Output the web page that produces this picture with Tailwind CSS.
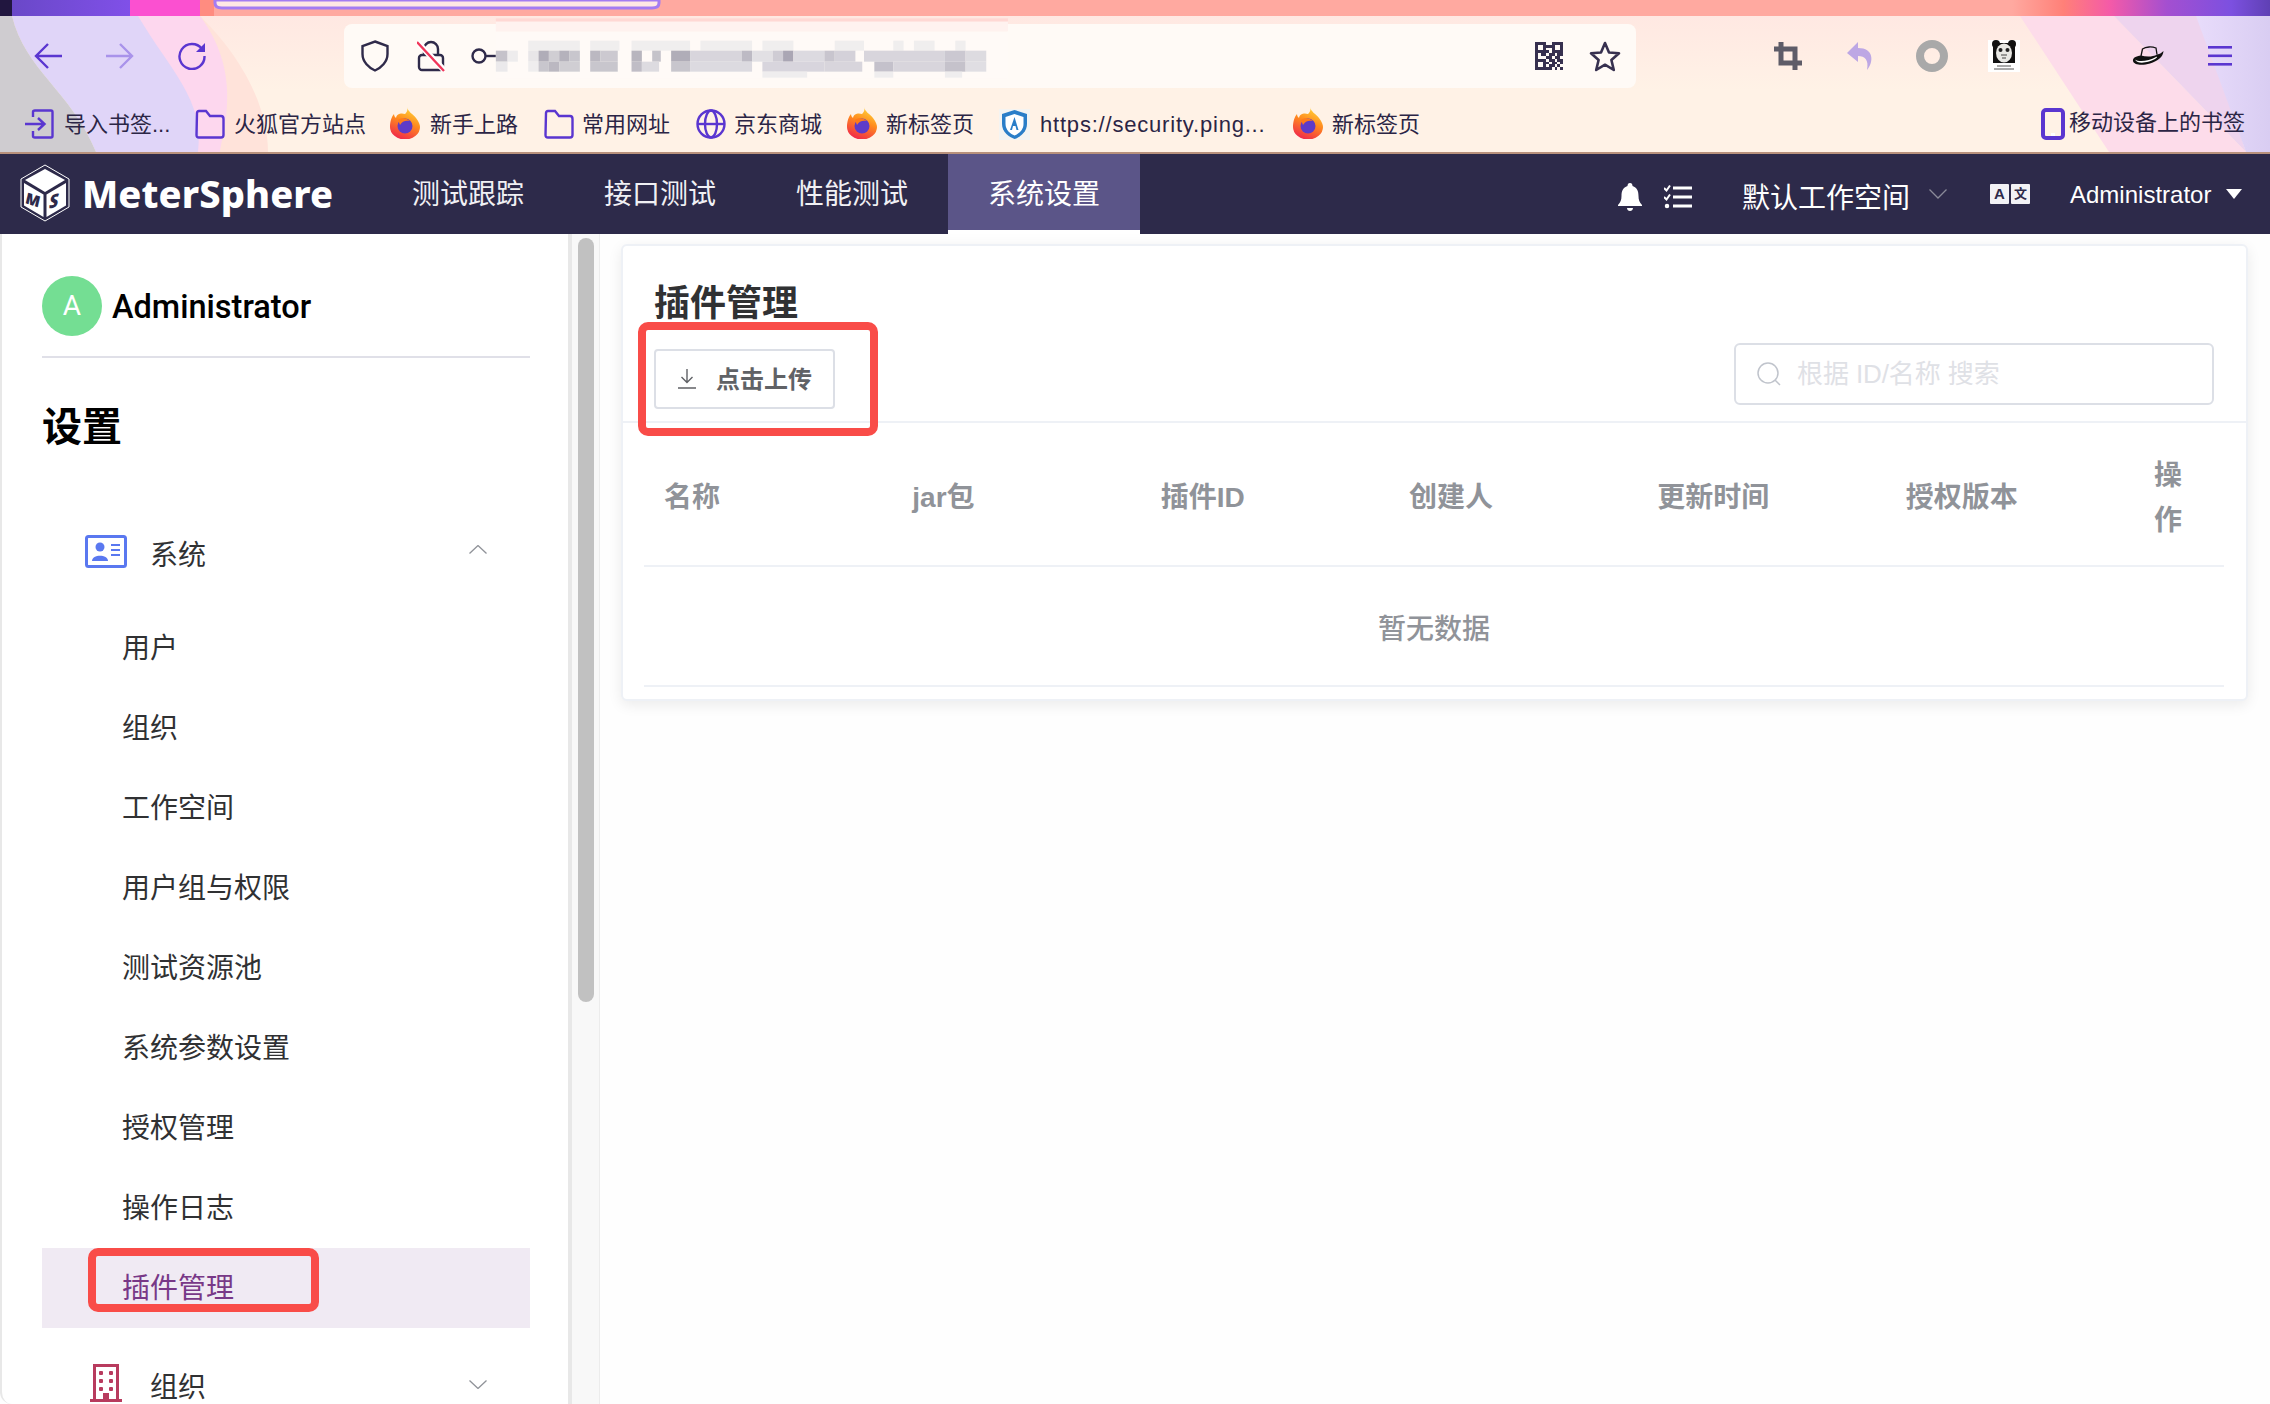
<!DOCTYPE html>
<html lang="zh-CN">
<head>
<meta charset="utf-8">
<title>插件管理</title>
<script src="https://cdn.jsdelivr.net/npm/@tailwindcss/browser@4"></script>
</head>
<body class="m-0 bg-[#fefefe]">
<div class="w-[2270px] h-[1404px] overflow-hidden flex flex-col font-['Liberation_Sans','Noto_Sans_CJK_SC',sans-serif] relative">

  <!-- browser chrome -->
  <header class="relative h-[154px] shrink-0 flex flex-col text-[#2b2545]">
    <svg class="absolute inset-0" width="2270" height="154" viewBox="0 0 2270 154" aria-hidden="true">
      <defs>
        <linearGradient id="tb" x1="0" y1="0" x2="0" y2="1"><stop offset="0" stop-color="#ffe8e2"/><stop offset="0.55" stop-color="#fff2e6"/><stop offset="1" stop-color="#fff2e6"/></linearGradient>
        <linearGradient id="rl" x1="0" y1="0" x2="1" y2="0"><stop offset="0" stop-color="#e8dcfb"/><stop offset="1" stop-color="#d9cdf2"/></linearGradient>
        <linearGradient id="sp" x1="0" y1="0" x2="1" y2="0"><stop offset="0" stop-color="#6a48c8"/><stop offset="1" stop-color="#8050e8"/></linearGradient>
        <linearGradient id="sr" x1="0" y1="0" x2="1" y2="0"><stop offset="0" stop-color="#ffa9a0"/><stop offset="0.2" stop-color="#ff8078"/><stop offset="0.38" stop-color="#f45aa8"/><stop offset="0.6" stop-color="#a44fd0"/><stop offset="0.85" stop-color="#7c50e0"/><stop offset="1" stop-color="#5f40b4"/></linearGradient>
      </defs>
      <rect x="0" y="16" width="2270" height="136" fill="url(#tb)"/>
      <rect x="0" y="0" width="2270" height="16" fill="#ffa9a0"/>
      <rect x="0" y="0" width="12" height="16" fill="#21163f"/>
      <rect x="12" y="0" width="118" height="16" fill="url(#sp)"/>
      <rect x="130" y="0" width="70" height="16" fill="#fb50d0"/>
      <rect x="200" y="0" width="14" height="16" fill="#ff8c80"/>
      <rect x="2012" y="0" width="258" height="16" fill="url(#sr)"/>
      <path d="M200 16 C245 60 268 110 268 152 L220 152 C222 90 205 50 138 16 Z" fill="#ffe3da"/>
      <path d="M138 16 H200 C240 70 226 120 220 152 H96 Z" fill="#fdd7ee"/>
      <path d="M12 16 H138 C170 70 205 100 198 152 H96 C70 90 25 70 12 16 Z" fill="#e0d5f8"/>
      <path d="M0 16 H12 C25 70 70 90 96 152 H0 Z" fill="#cfccd0"/>
      <path d="M2020 16 H2114 L2246 152 H2109 Z" fill="#fddcea"/>
      <path d="M2114 16 H2200 L2246 152 Z" fill="#eed4ee"/>
      <path d="M2196 16 H2270 V152 H2246 Z" fill="url(#rl)"/>
      <rect x="0" y="152" width="2270" height="2" fill="#b8917c"/>
      <path d="M215 0 V3 Q215 8 222 8 H652 Q659 8 659 3 V0 Z" fill="#ffe8e4" stroke="#a47cf2" stroke-width="3"/>
    </svg>

    <div class="relative h-[16px]"></div>

    <!-- toolbar -->
    <div class="relative h-[80px] flex items-center">
      <button class="ml-[34px] w-[28px] h-[28px] flex" aria-label="后退"><svg width="28" height="28" viewBox="0 0 28 28" fill="none" stroke="#5a36d0" stroke-width="2.4"><path d="M14 2 L2 14 L14 26 M2 14 H28"/></svg></button>
      <button class="ml-[44px] w-[28px] h-[28px] flex" aria-label="前进"><svg width="28" height="28" viewBox="0 0 28 28" fill="none" stroke="#a993ea" stroke-width="2.4"><path d="M14 2 L26 14 L14 26 M26 14 H0"/></svg></button>
      <button class="ml-[44px] w-[28px] h-[28px] flex" aria-label="刷新"><svg width="28" height="28" viewBox="0 0 28 28" fill="none"><path d="M24 7 A12.5 12.5 0 1 0 26.5 14" stroke="#5a36d0" stroke-width="2.4"/><path d="M27 1 V10 H18 Z" fill="#5a36d0"/></svg></button>

      <div class="ml-[138px] w-[1292px] h-[64px] rounded-[8px] bg-[#fffaf6] flex items-center pl-[17px] pr-[15px]">
        <svg width="28" height="32" viewBox="0 0 28 32" fill="none" stroke="#2f2a4a" stroke-width="2.4"><path d="M14 1.5 L26.5 6 V14 C26.5 22 20 28 14 30.5 C8 28 1.5 22 1.5 14 V6 Z"/></svg>
        <svg class="ml-[28px]" width="28" height="32" viewBox="0 0 28 32" fill="none"><path d="M7 14 V9 A7 7 0 0 1 21 9 V14" stroke="#2f2a4a" stroke-width="2.4"/><rect x="2" y="15" width="24" height="15" rx="3" stroke="#2f2a4a" stroke-width="2.4"/><path d="M0 2 L28 31" stroke="#fff" stroke-width="6"/><path d="M0 2 L27 31" stroke="#f0365a" stroke-width="2.4"/></svg>
        <svg class="ml-[26px]" width="26" height="20" viewBox="0 0 26 20" fill="none" stroke="#2f2a4a" stroke-width="2.4"><circle cx="8" cy="10" r="6.5"/><path d="M14.5 10 H26"/></svg>
        <div class="flex-1"></div>
        <svg width="28" height="28" viewBox="0 0 10 10" fill="#37304f" fill-rule="evenodd" shape-rendering="crispEdges"><path d="M0 0h4v4h-4z M1 1v2h2v-2z M6 0h4v4h-4z M7 1v2h2v-2z M0 6h4v4h-4z M1 7v2h2v-2z"/><path d="M4 1h2v1h-2z M4 3h1v1h-1z M0 4h1v2h-1z M2 4h2v1h-2z M5 4h2v1h-2z M8 4h2v1h-2z M4 5h2v1h-2z M7 5h2v1h-2z M5 6h2v1h-2z M8 6h2v1h-2z M4 7h1v1h-1z M6 7h2v1h-2z M9 7h1v1h-1z M5 8h2v1h-2z M8 8h1v1h-1z M4 9h2v1h-2z M7 9h1v1h-1z M9 9h1v1h-1z"/></svg>
        <svg class="ml-[26px]" width="32" height="31" viewBox="0 0 32 31" fill="none" stroke="#37304f" stroke-width="2.6" stroke-linejoin="round"><path d="M16 2 L20 11.5 L30 12.3 L22.4 19 L24.8 29 L16 23.7 L7.2 29 L9.6 19 L2 12.3 L12 11.5 Z"/></svg>
      </div>

      <svg class="ml-[138px]" width="28" height="28" viewBox="0 0 28 28" fill="none" stroke="#5e5c68" stroke-width="5"><path d="M7 0 V21 H28 M0 7 H21 V28"/></svg>
      <svg class="ml-[44px]" width="28" height="28" viewBox="0 0 28 28" fill="#bda7e4"><path d="M12 0 L1 11 L12 20 V14 C19 14 23 18 21 28 C28 20 28 6 12 6 Z"/></svg>
      <svg class="ml-[42px]" width="32" height="32" viewBox="0 0 32 32" fill="none" stroke="#a9a9a9" stroke-width="8"><circle cx="16" cy="16" r="12"/></svg>
      <svg class="ml-[40px]" width="32" height="32" viewBox="0 0 32 32"><rect width="32" height="32" fill="#fff"/><circle cx="8" cy="4" r="4" fill="#111"/><circle cx="24" cy="4" r="4" fill="#111"/><path d="M5 3 H27 V23 H5 Z" fill="#111"/><ellipse cx="16" cy="13" rx="8" ry="9.500" fill="#e8e8e4"/><circle cx="12.500" cy="10" r="2" fill="#222"/><circle cx="19.500" cy="10" r="2" fill="#222"/><path d="M13 15 H19 M14 18 H18" stroke="#444"/><path d="M9 26 H23 M6 29 H26" stroke="#555" stroke-width="1"/></svg>
      <svg class="ml-[112px]" width="32" height="20" viewBox="0 0 32 20" fill="none"><path d="M9 10 L10.500 3 C14 0.500 20 0.500 24 2 L25 8.500" stroke="#111" stroke-width="1.300"/><path d="M9 9.500 C14 11 21 11 25 8.500 C28 8 30 6.500 31.500 5 C31 11 26 15 18 17.500 C10 20 2 19 1 15 C0.500 12 4 10 9 9.500 Z" fill="#111"/><path d="M3 13.500 C7 16.500 17 15 24 11 C27 10 24 13.500 17 15.500 C10 17.500 5 17 3 13.500 Z" fill="#fff"/></svg>
      <svg class="ml-[44px]" width="24" height="20" viewBox="0 0 24 20" fill="#5a36d0"><rect y="0" width="24" height="2.600"/><rect y="8.500" width="24" height="2.600"/><rect y="17" width="24" height="2.600"/></svg>
    </div>

    <!-- pixelated address -->
    <svg class="absolute left-[480px] top-[10px] blur-[0.7px]" width="540" height="90" viewBox="0 0 1568 270" preserveAspectRatio="none" aria-hidden="true">
      <rect x="46" y="25" width="1487" height="10" fill="#ffd8d4"/>
      <rect x="46" y="35" width="1487" height="30" fill="#fff2ef"/>
      <rect x="46" y="65" width="1487" height="140" fill="#fffaf7"/>
      <g fill="#f0eeee"><rect x="140" y="92" width="150" height="30"/><rect x="320" y="92" width="85" height="30"/><rect x="440" y="92" width="170" height="30"/><rect x="640" y="92" width="150" height="30"/><rect x="820" y="92" width="90" height="30"/><rect x="1030" y="92" width="85" height="30"/><rect x="1200" y="92" width="30" height="30"/><rect x="1260" y="92" width="60" height="30"/><rect x="1380" y="92" width="30" height="30"/></g>
      <rect x="46" y="122" width="34" height="33" fill="#c5c2ca"/><rect x="80" y="122" width="30" height="33" fill="#eeeced"/><rect x="140" y="122" width="30" height="33" fill="#e8e6e8"/><rect x="170" y="122" width="30" height="33" fill="#b0adb8"/><rect x="200" y="122" width="30" height="33" fill="#d0ced3"/><rect x="230" y="122" width="30" height="33" fill="#b5b2bc"/><rect x="260" y="122" width="30" height="33" fill="#c8c6cd"/><rect x="320" y="122" width="30" height="33" fill="#bbb8c1"/><rect x="350" y="122" width="50" height="33" fill="#ccc9d0"/><rect x="440" y="122" width="30" height="33" fill="#b8b5be"/><rect x="500" y="122" width="25" height="33" fill="#c5c3ca"/><rect x="555" y="122" width="55" height="33" fill="#b0adb8"/><rect x="610" y="122" width="150" height="33" fill="#d8d5dc"/><rect x="760" y="122" width="30" height="33" fill="#bdbac4"/><rect x="790" y="122" width="60" height="33" fill="#e2e0e4"/><rect x="850" y="122" width="30" height="33" fill="#cfccd4"/><rect x="880" y="122" width="30" height="33" fill="#aaa6b4"/><rect x="910" y="122" width="90" height="33" fill="#dcdae0"/><rect x="1000" y="122" width="30" height="33" fill="#c8c5ce"/><rect x="1030" y="122" width="60" height="33" fill="#d4d1d9"/><rect x="1115" y="122" width="235" height="33" fill="#d8d5dc"/><rect x="1350" y="122" width="60" height="33" fill="#cbc8d1"/><rect x="1410" y="122" width="60" height="33" fill="#dddbe0"/>
      <rect x="46" y="155" width="34" height="30" fill="#ebe9eb"/><rect x="140" y="155" width="30" height="30" fill="#efedee"/><rect x="170" y="155" width="30" height="30" fill="#c8c6cd"/><rect x="200" y="155" width="30" height="30" fill="#bbb8c1"/><rect x="230" y="155" width="60" height="30" fill="#d0ced3"/><rect x="320" y="155" width="80" height="30" fill="#c8c6cd"/><rect x="440" y="155" width="30" height="30" fill="#c0bdc6"/><rect x="470" y="155" width="50" height="30" fill="#dddbe0"/><rect x="555" y="155" width="55" height="30" fill="#c8c6cd"/><rect x="610" y="155" width="180" height="30" fill="#dcdae0"/><rect x="820" y="155" width="180" height="30" fill="#d8d5dd"/><rect x="1000" y="155" width="110" height="30" fill="#d8d5dc"/><rect x="1145" y="155" width="55" height="30" fill="#c4c1cb"/><rect x="1200" y="155" width="150" height="30" fill="#d8d5dc"/><rect x="1350" y="155" width="60" height="30" fill="#c5c2cb"/><rect x="1410" y="155" width="60" height="30" fill="#e0dee3"/>
      <g fill="#efedee"><rect x="820" y="185" width="130" height="18"/><rect x="1145" y="185" width="55" height="18"/><rect x="1350" y="185" width="50" height="18"/></g>
    </svg>

    <!-- bookmarks -->
    <nav class="relative h-[56px] flex items-center text-[22px] leading-[28px]">
      <svg class="ml-[25px]" width="29" height="30" viewBox="0 0 29 30" fill="none" stroke="#5a36d0" stroke-width="2.4"><path d="M8 8 V3 Q8 1.500 10 1.500 H26 Q27.500 1.500 27.500 3 V27 Q27.500 28.500 26 28.500 H10 Q8 28.500 8 27 V22 M0 15 H19 M13 9 L19.500 15 L13 21"/></svg>
      <span class="ml-[10px] mt-[2px] w-[103px] whitespace-nowrap">导入书签...</span>
      <svg class="ml-[28px]" width="30" height="30" viewBox="0 0 30 30" fill="none" stroke="#5a36d0" stroke-width="2.4"><path d="M2 4 Q2 2 4 2 H11 L15 7 H26 Q28.500 7 28.500 10 V26 Q28.500 28.500 26 28.500 H4 Q1.500 28.500 1.500 26 Z"/></svg>
      <span class="ml-[9px] mt-[2px] w-[130px] whitespace-nowrap">火狐官方站点</span>
      <svg class="ml-[26px] -mt-[2px]" width="30" height="32" viewBox="0 0 30 32"><defs><linearGradient id="ff" x1="0.700" y1="0" x2="0.300" y2="1"><stop offset="0" stop-color="#ffd83a"/><stop offset="0.450" stop-color="#ff8a1e"/><stop offset="1" stop-color="#f0264c"/></linearGradient></defs><path d="M17 0 C18 5 23 7 26 11 C29 15 30 18 30 20 A15 12.500 0 0 1 0 20 C0 14 2 9 4 7 C4 9 5 10 6 11 C7 6 12 6 15 7 C17 5 18 3 17 0 Z" fill="url(#ff)"/><circle cx="15" cy="19" r="7.500" fill="#5e3bc8"/><path d="M8 13 C11 10 17 11 20 14 C16 13 12 14 10 18 Z" fill="#ff7a1a"/></svg>
      <span class="ml-[10px] mt-[2px] w-[88px] whitespace-nowrap">新手上路</span>
      <svg class="ml-[26px]" width="30" height="30" viewBox="0 0 30 30" fill="none" stroke="#5a36d0" stroke-width="2.4"><path d="M2 4 Q2 2 4 2 H11 L15 7 H26 Q28.500 7 28.500 10 V26 Q28.500 28.500 26 28.500 H4 Q1.500 28.500 1.500 26 Z"/></svg>
      <span class="ml-[8px] mt-[2px] w-[88px] whitespace-nowrap">常用网址</span>
      <svg class="ml-[26px]" width="30" height="30" viewBox="0 0 30 30" fill="none" stroke="#5a36d0" stroke-width="2.4"><circle cx="15" cy="15" r="13.500"/><ellipse cx="15" cy="15" rx="6" ry="13.500"/><path d="M1.500 15 H28.500"/></svg>
      <span class="ml-[8px] mt-[2px] w-[88px] whitespace-nowrap">京东商城</span>
      <svg class="ml-[25px] -mt-[2px]" width="30" height="32" viewBox="0 0 30 32"><path d="M17 0 C18 5 23 7 26 11 C29 15 30 18 30 20 A15 12.500 0 0 1 0 20 C0 14 2 9 4 7 C4 9 5 10 6 11 C7 6 12 6 15 7 C17 5 18 3 17 0 Z" fill="url(#ff)"/><circle cx="15" cy="19" r="7.500" fill="#5e3bc8"/><path d="M8 13 C11 10 17 11 20 14 C16 13 12 14 10 18 Z" fill="#ff7a1a"/></svg>
      <span class="ml-[9px] mt-[2px] w-[88px] whitespace-nowrap">新标签页</span>
      <svg class="ml-[25px]" width="31" height="31" viewBox="0 0 31 31"><rect width="31" height="31" fill="#f4f4f2"/><path d="M15.500 1 L28 5 V15 C28 23 21 28 15.500 30 C10 28 3 23 3 15 V5 Z" fill="#2a7ec8"/><path d="M15.500 5 L24.500 8 V15 C24.500 21 19.500 25 15.500 26.500 C11.500 25 6.500 21 6.500 15 V8 Z" fill="#fff"/><path d="M15.500 8 L19.500 21 H17.500 L16.500 17 H14 L13 21 H11 Z" fill="#2a7ec8"/></svg>
      <span class="ml-[10px] mt-[2px] w-[225px] whitespace-nowrap tracking-[0.8px]">https://security.ping...</span>
      <svg class="ml-[28px] -mt-[2px]" width="30" height="32" viewBox="0 0 30 32"><path d="M17 0 C18 5 23 7 26 11 C29 15 30 18 30 20 A15 12.500 0 0 1 0 20 C0 14 2 9 4 7 C4 9 5 10 6 11 C7 6 12 6 15 7 C17 5 18 3 17 0 Z" fill="url(#ff)"/><circle cx="15" cy="19" r="7.500" fill="#5e3bc8"/><path d="M8 13 C11 10 17 11 20 14 C16 13 12 14 10 18 Z" fill="#ff7a1a"/></svg>
      <span class="ml-[9px] mt-[2px] w-[88px] whitespace-nowrap">新标签页</span>
      <svg class="ml-[621px]" width="24" height="32" viewBox="0 0 24 32" fill="none"><rect x="2" y="2" width="20" height="28" rx="3" stroke="#5a36d0" stroke-width="4"/><rect x="10" y="25" width="4" height="3" fill="#fff"/></svg>
      <span class="ml-[4px] -mt-[2px] whitespace-nowrap">移动设备上的书签</span>
    </nav>
  </header>

  <!-- app nav -->
  <div class="h-[80px] shrink-0 bg-[#2d2a4a] flex text-white relative">
    <div class="w-[372px] shrink-0 flex items-center pl-[20px]">
      <svg class="-mt-[2px]" width="50" height="58" viewBox="0 0 50 58">
        <path d="M25 1 L49 15 V43 L25 57 L1 43 V15 Z" fill="none" stroke="#fff" stroke-width="1"/>
        <path d="M25 5 L45 16 L25 28 L5 16 Z" fill="#fff"/>
        <path d="M4 19 L23.500 30.500 V53 L4 41.500 Z" fill="#fff"/>
        <path d="M46 19 L26.500 30.500 V53 L46 41.500 Z" fill="#fff"/>
        <text x="5.500" y="40" transform="skewY(18) translate(0 -2.500)" font-family="Noto Sans" font-weight="900" font-style="italic" font-size="16" fill="#2d2a4a">M</text>
        <text x="29" y="39" transform="skewY(-18) translate(0 15.500)" font-family="Noto Sans" font-weight="900" font-style="italic" font-size="18" fill="#2d2a4a">S</text>
      </svg>
      <span class="ml-[12px] text-[38px] font-extrabold tracking-[0.1px] font-['Noto_Sans',sans-serif] leading-none -mt-[3px]">MeterSphere</span>
    </div>
    <a class="w-[192px] text-center text-[28px] leading-[82px] h-[80px] text-[#f0f0f4]">测试跟踪</a>
    <a class="w-[192px] text-center text-[28px] leading-[82px] h-[80px] text-[#f0f0f4]">接口测试</a>
    <a class="w-[192px] text-center text-[28px] leading-[82px] h-[80px] text-[#f0f0f4]">性能测试</a>
    <a class="w-[192px] text-center text-[28px] leading-[82px] h-[80px] bg-[#5b5588] border-b-4 border-white">系统设置</a>
    <div class="flex-1"></div>
    <div class="w-[652px] shrink-0 flex items-center">
      <svg class="mt-[6px]" width="24" height="28" viewBox="0 0 24 28" fill="#fff"><path d="M12 0 C14 0 14.500 1.500 14.500 3 C19 4.500 20.500 8 20.500 13 C20.500 17 21.500 19 24 22 V23 H0 V22 C2.500 19 3.500 17 3.500 13 C3.500 8 5 4.500 9.500 3 C9.500 1.500 10 0 12 0 Z M9 25 H15 C15 29 9 29 9 25 Z"/></svg>
      <svg class="ml-[22px] mt-[6px]" width="28" height="26" viewBox="0 0 28 26" fill="none" stroke="#fff" stroke-width="3"><path d="M9 4 H28 M9 13 H28 M9 22 H28"/><path d="M0 4 L2.500 6.500 L6 1.500" stroke-width="2"/><path d="M0 13 L2.500 15.500 L6 10.500" stroke-width="2"/><circle cx="3" cy="22" r="1.500" fill="#fff" stroke-width="1.500"/></svg>
      <span class="ml-[50px] text-[28px] text-white whitespace-nowrap mt-[10px]">默认工作空间</span>
      <svg class="ml-[19px]" width="18" height="10" viewBox="0 0 18 10" fill="none" stroke="#8a8a99" stroke-width="1.300"><path d="M0.500 0.500 L9 9 L17.500 0.500"/></svg>
      <div class="ml-[43px] flex gap-[2px]">
        <span class="w-[19px] h-[20px] bg-[#f2f2f5] rounded-[1px] text-[#2d2a4a] text-[15px] font-bold leading-[20px] text-center">A</span>
        <span class="w-[19px] h-[20px] bg-[#f2f2f5] rounded-[1px] text-[#2d2a4a] text-[13px] font-bold leading-[20px] text-center">文</span>
      </div>
      <span class="ml-[40px] text-[24px] text-white whitespace-nowrap mt-[2px]">Administrator</span>
      <svg class="ml-[15px]" width="16" height="10" viewBox="0 0 16 10" fill="#fff"><path d="M0 0 H16 L8 10 Z"/></svg>
    </div>
  </div>

  <!-- body -->
  <div class="flex-1 flex min-h-0">
    <aside class="w-[572px] shrink-0 bg-white border-l-2 border-l-[#e8e8e8] border-r-4 border-r-[#e8e8e8] pl-[40px] overflow-hidden rounded-bl-[12px]">
      <div class="w-[488px]">
        <div class="h-[124px] pt-[42px] border-b-2 border-[#e0e0e8] flex items-start">
          <span class="w-[60px] h-[60px] rounded-full bg-[#74de93] text-white text-[28px] leading-[60px] text-center font-['Roboto',sans-serif]">A</span>
          <span class="ml-[10px] text-[32.500px] leading-[62px] font-medium text-black font-['Roboto',sans-serif]">Administrator</span>
        </div>
        <h2 class="mt-[46px] text-[40px] leading-[46px] font-bold text-black">设置</h2>
        <div class="mt-[66px] h-[80px] pl-[43px] flex items-center relative text-[28px] text-[#303133]">
          <svg width="42" height="33" viewBox="0 0 42 33" fill="none" class="-mt-[10px]"><rect x="1.500" y="1.500" width="39" height="30" rx="2" fill="#fff" stroke="#5a78f0" stroke-width="3"/><circle cx="15" cy="12" r="4.500" fill="#5a78f0"/><path d="M7 26 C7 19 23 19 23 26 Z" fill="#5a78f0"/><path d="M26 10 H35 M26 15 H35 M26 20 H35" stroke="#5a78f0" stroke-width="2"/></svg>
          <span class="ml-[23px]">系统</span>
          <svg class="absolute left-[427px] top-[29px]" width="18" height="9" viewBox="0 0 18 9" fill="none" stroke="#909399" stroke-width="1.300"><path d="M0.500 8.500 L9 0.500 L17.500 8.500"/></svg>
        </div>
        <ul class="mt-[12px] text-[28px] text-[#303133]">
          <li class="h-[80px] leading-[82px] pl-[80px]">用户</li>
          <li class="h-[80px] leading-[82px] pl-[80px]">组织</li>
          <li class="h-[80px] leading-[82px] pl-[80px]">工作空间</li>
          <li class="h-[80px] leading-[82px] pl-[80px]">用户组与权限</li>
          <li class="h-[80px] leading-[82px] pl-[80px]">测试资源池</li>
          <li class="h-[80px] leading-[82px] pl-[80px]">系统参数设置</li>
          <li class="h-[80px] leading-[82px] pl-[80px]">授权管理</li>
          <li class="h-[80px] leading-[82px] pl-[80px]">操作日志</li>
          <li class="h-[80px] leading-[82px] pl-[80px] bg-[#f0eaf3] text-[#783887]">插件管理</li>
        </ul>
        <div class="mt-[16px] h-[80px] pl-[48px] flex items-center relative text-[28px] text-[#303133]">
          <svg class="-mt-[2px]" width="32" height="38" viewBox="0 0 32 38" fill="#b83b5e"><path d="M3 0 H29 V35 H32 V38 H0 V35 H3 Z M6 3 V35 H13 V29 H19 V35 H26 V3 Z"/><rect x="9" y="7" width="4" height="4" rx="1"/><rect x="19" y="7" width="4" height="4" rx="1"/><rect x="9" y="15" width="4" height="4" rx="1"/><rect x="19" y="15" width="4" height="4" rx="1"/><rect x="9" y="23" width="4" height="4" rx="1"/><rect x="19" y="23" width="4" height="4" rx="1"/></svg>
          <span class="ml-[28px] mt-[8px]">组织</span>
          <svg class="absolute left-[427px] top-[36px]" width="18" height="9" viewBox="0 0 18 9" fill="none" stroke="#909399" stroke-width="1.300"><path d="M0.500 0.500 L9 8.500 L17.500 0.500"/></svg>
        </div>
      </div>
    </aside>

    <!-- scrollbar -->
    <div class="w-[28px] shrink-0 bg-[#f8f8f8] border-r border-[#ececec] pl-[6px] pt-[4px]">
      <div class="w-[16px] h-[764px] rounded-full bg-[#c1c1c1]"></div>
    </div>

    <!-- main -->
    <main class="flex-1 min-w-0 pl-[21px] pt-[10px]">
      <section class="w-[1627px] h-[457px] bg-white border-2 border-[#eef1f6] rounded-[6px] shadow-[0_4px_14px_rgba(0,0,0,0.08)]">
        <div class="h-[177px] border-b-2 border-[#eef1f6] pt-[40px] pl-[31px] pr-[32px] flex flex-col">
          <h1 class="text-[36px] leading-[36px] font-bold text-[#303133]">插件管理</h1>
          <div class="mt-[21px] flex justify-between items-start">
            <button class="mt-[6px] w-[181px] h-[60px] border-2 border-[#dcdfe6] rounded-[4px] bg-white flex items-center pl-[22px] text-[24px] font-semibold text-[#606266]">
              <svg width="18" height="20" viewBox="0 0 18 20" fill="none" stroke="#606266" stroke-width="1.400"><path d="M9 0 V13 M3.500 8 L9 13.500 L14.500 8 M0 19 H18"/></svg>
              <span class="ml-[20px] mt-[1px]">点击上传</span>
            </button>
            <div class="w-[480px] h-[62px] border-2 border-[#dcdfe6] rounded-[6px] flex items-center pl-[21px] text-[26px] text-[#dfe1e6]">
              <svg width="24" height="24" viewBox="0 0 24 24" fill="none" stroke="#c0c4cc" stroke-width="1.500"><circle cx="11" cy="11" r="10"/><path d="M18 18 L23 23"/></svg>
              <span class="ml-[16px] tracking-[-0.1px]">根据 ID/名称 搜索</span>
            </div>
          </div>
        </div>
        <div class="ml-[21px] w-[1580px]">
          <div class="grid grid-cols-[repeat(6,248.33px)_90px] h-[144px] pt-[7px] border-b-2 border-[#eef1f6] items-center text-[28px] leading-[45px] font-bold text-[#909399]">
            <div class="pl-[20px]">名称</div>
            <div class="pl-[20px]">jar包</div>
            <div class="pl-[20px]">插件ID</div>
            <div class="pl-[20px]">创建人</div>
            <div class="pl-[20px]">更新时间</div>
            <div class="pl-[20px]">授权版本</div>
            <div class="pl-[20px] pr-[20px]">操作</div>
          </div>
          <div class="h-[120px] pt-[7px] border-b-2 border-[#eef1f6] flex items-center justify-center text-[28px] font-medium text-[#909399]">暂无数据</div>
        </div>
      </section>
    </main>
  </div>

  <!-- annotation boxes drawn over the screenshot -->
  <div class="absolute left-[638px] top-[322px] w-[240px] h-[114px] border-[8px] border-[#f94c48] rounded-[10px]"></div>
  <div class="absolute left-[88px] top-[1248px] w-[231px] h-[64px] border-[8px] border-[#f94c48] rounded-[10px]"></div>
</div>
</body>
</html>
